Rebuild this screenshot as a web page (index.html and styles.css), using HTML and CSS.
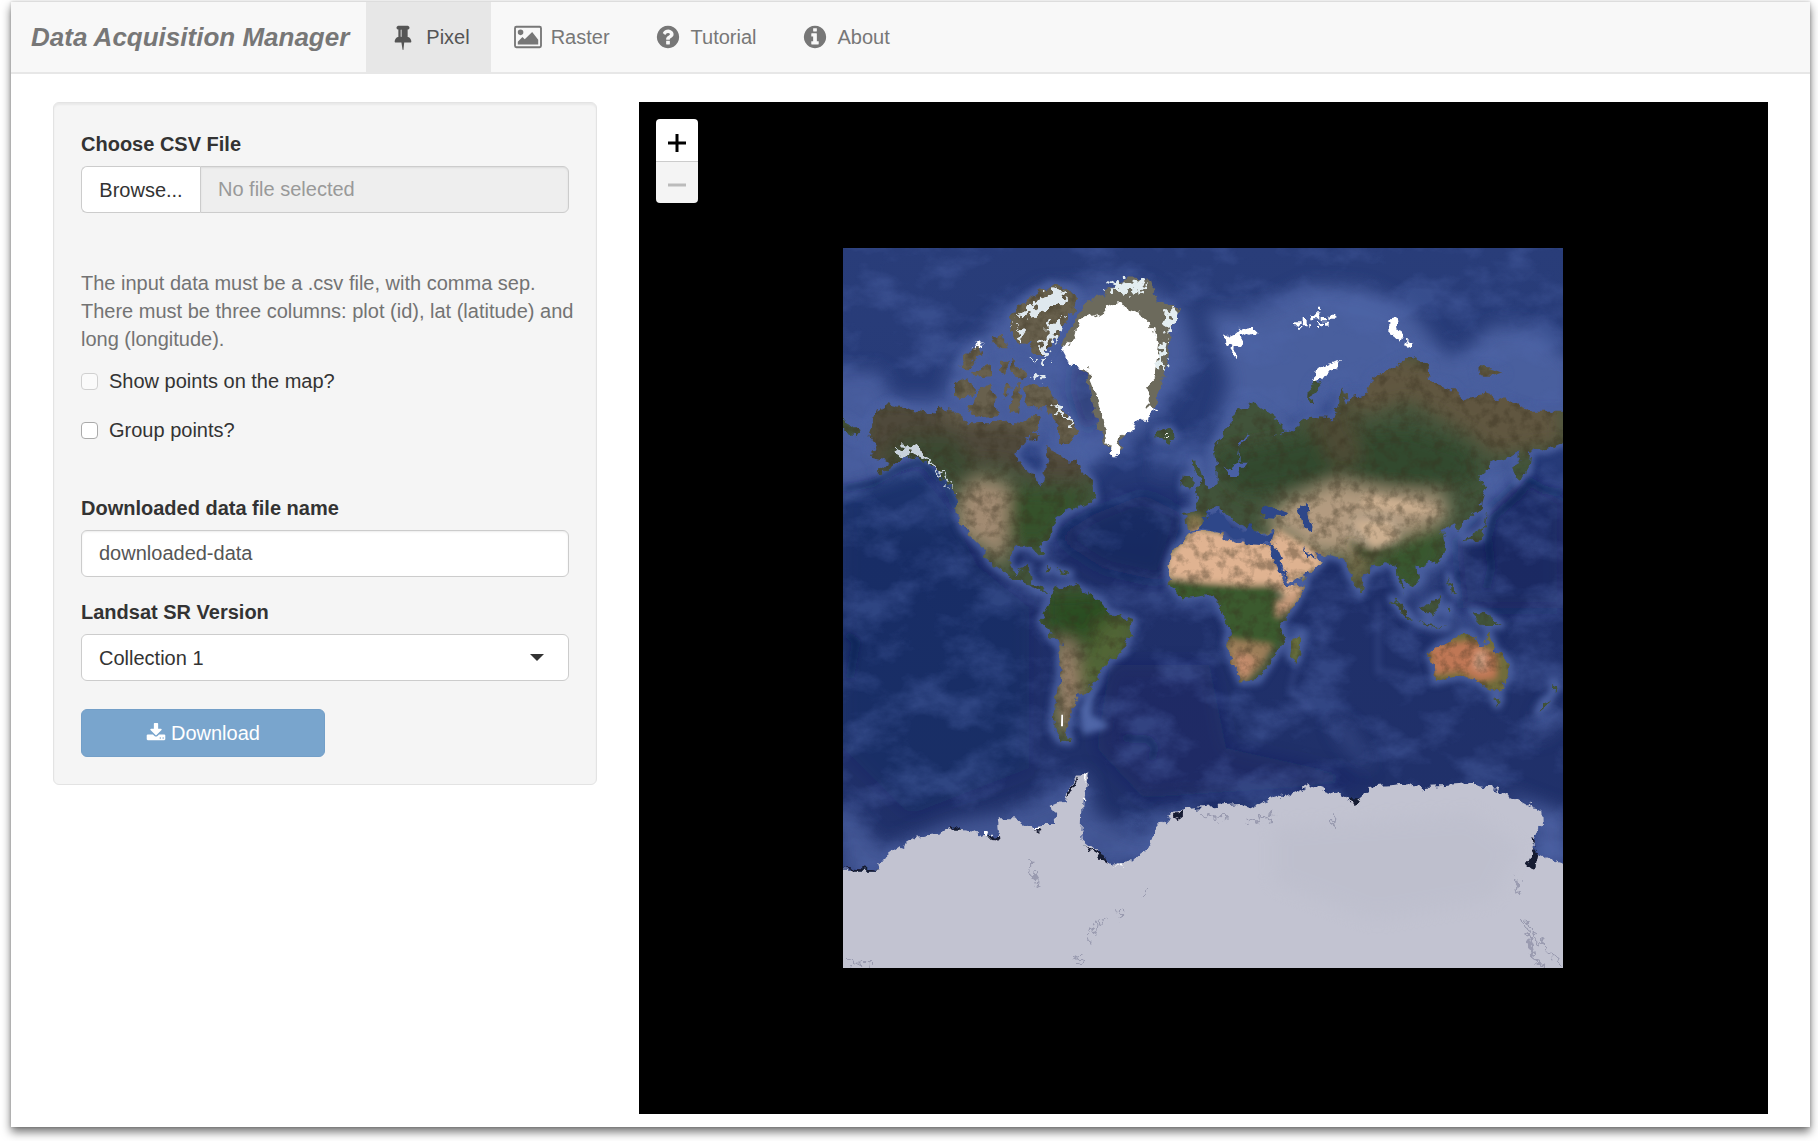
FILE: index.html
```html
<!DOCTYPE html>
<html lang="en">
<head>
<meta charset="utf-8">
<title>Data Acquisition Manager</title>
<link rel="stylesheet" href="styles.css">
</head>
<body>
<div class="window">
  <nav class="navbar">
    <a class="brand" href="#">Data Acquisition Manager</a>
    <a class="tab tab-active" href="#pixel">
      <svg class="icon icon-nav" viewBox="0 0 1792 1792" aria-hidden="true"><path d="M800 864v-448q0-14-9-23t-23-9-23 9-9 23v448q0 14 9 23t23 9 23-9 9-23zm672 352q0 26-19 45t-45 19h-429l-51 483q-2 12-10.500 20.500t-20.500 8.500h-1q-27 0-32-27l-76-485h-404q-26 0-45-19t-19-45q0-123 78.500-221.500t177.500-98.500v-512q-52 0-90-38t-38-90 38-90 90-38h640q52 0 90 38t38 90-38 90-90 38v512q99 0 177.500 98.500t78.500 221.500z"/></svg>
      <span>Pixel</span>
    </a>
    <a class="tab" href="#raster">
      <svg class="icon icon-nav" viewBox="0 -128 1920 1792" aria-hidden="true"><path fill-rule="evenodd" d="M640 448a192 192 0 1 1-384 0 192 192 0 1 1 384 0zM1664 960v320H256v-192l320-320 160 160 512-512zM1760 128H160q-32 0-32 32v1216q0 32 32 32h1600q32 0 32-32V160q0-32-32-32zM1920 160v1216q0 160-160 160H160Q0 1536 0 1376V160Q0 0 160 0h1600q160 0 160 160z"/></svg>
      <span>Raster</span>
    </a>
    <a class="tab" href="#tutorial">
      <svg class="icon icon-nav" viewBox="0 0 1792 1792" aria-hidden="true"><path d="M1024 1376v-192q0-14-9-23t-23-9h-192q-14 0-23 9t-9 23v192q0 14 9 23t23 9h192q14 0 23-9t9-23zm256-672q0-88-55.500-163t-138.500-116-170-41q-243 0-371 213-15 24 8 42l132 100q7 6 19 6 16 0 25-12 53-68 86-92 34-24 86-24 48 0 85.500 26t37.500 59q0 38-20 61t-68 45q-63 28-115.500 86.500t-52.500 125.500v36q0 14 9 23t23 9h192q14 0 23-9t9-23q0-19 21.500-49.500t54.500-49.500q32-18 49-28.500t46-35 44.500-48 28-60.500 12.500-81zm384 192q0 209-103 385.500t-279.500 279.500-385.500 103-385.500-103-279.500-279.500-103-385.500 103-385.500 279.500-279.500 385.500-103 385.500 103 279.500 279.500 103 385.500z"/></svg>
      <span>Tutorial</span>
    </a>
    <a class="tab" href="#about">
      <svg class="icon icon-nav" viewBox="0 0 1792 1792" aria-hidden="true"><path d="M1152 1376v-160q0-14-9-23t-23-9h-96v-512q0-14-9-23t-23-9h-320q-14 0-23 9t-9 23v160q0 14 9 23t23 9h96v320h-96q-14 0-23 9t-9 23v160q0 14 9 23t23 9h448q14 0 23-9t9-23zm-128-896v-160q0-14-9-23t-23-9h-192q-14 0-23 9t-9 23v160q0 14 9 23t23 9h192q14 0 23-9t9-23zm640 416q0 209-103 385.500t-279.500 279.500-385.500 103-385.500-103-279.500-279.500-103-385.500 103-385.500 279.500-279.500 385.500-103 385.500 103 279.500 279.500 103 385.500z"/></svg>
      <span>About</span>
    </a>
  </nav>

  <main class="content">
    <form class="panel">
      <label class="field-label" for="csv-name">Choose CSV File</label>
      <div class="file-group">
        <button class="browse" type="button">Browse...</button>
        <input class="control file-name" id="csv-name" type="text" placeholder="No file selected" readonly>
      </div>
      <p class="help">The input data must be a .csv file, with comma sep. There must be three columns: plot (id), lat (latitude) and long (longitude).</p>
      <label class="check"><input type="checkbox" disabled><span>Show points on the map?</span></label>
      <label class="check"><input type="checkbox"><span>Group points?</span></label>
      <label class="field-label spaced" for="file-name">Downloaded data file name</label>
      <input class="control" id="file-name" type="text" value="downloaded-data">
      <label class="field-label" for="version">Landsat SR Version</label>
      <div class="select-wrap">
        <select class="control" id="version"><option>Collection 1</option></select>
      </div>
      <button class="download" type="button" disabled>
        <svg class="icon icon-small" viewBox="0 0 1792 1792" aria-hidden="true"><path d="M1344 1344q0-26-19-45t-45-19-45 19-19 45 19 45 45 19 45-19 19-45zm256 0q0-26-19-45t-45-19-45 19-19 45 19 45 45 19 45-19 19-45zm128-224v320q0 40-28 68t-68 28h-1472q-40 0-68-28t-28-68v-320q0-40 28-68t68-28h465l135 136q58 56 136 56t136-56l136-136h464q40 0 68 28t28 68zm-325-569q17 41-14 70l-448 448q-18 19-45 19t-45-19l-448-448q-31-29-14-70 17-39 59-39h256v-448q0-26 19-45t45-19h256q26 0 45 19t19 45v448h256q42 0 59 39z"/></svg>
        <span>Download</span>
      </button>
    </form>

    <section class="map" aria-label="World map">
      <svg class="world" viewBox="0 0 2160 2160" aria-hidden="true">
        <defs>
          <linearGradient id="sea" x1="0" y1="0" x2="0" y2="1">
            <stop offset="0" stop-color="#293d79"/><stop offset=".3" stop-color="#263a78"/>
            <stop offset=".42" stop-color="#1f2f69"/><stop offset="1" stop-color="#21326b"/>
          </linearGradient>
          <filter id="rough" x="-5%" y="-5%" width="110%" height="110%">
            <feTurbulence type="fractalNoise" baseFrequency=".035" numOctaves="3" seed="4" result="n"/>
            <feDisplacementMap in="SourceGraphic" in2="n" scale="34" xChannelSelector="R" yChannelSelector="G"/>
          </filter>
          <filter id="shred" x="-10%" y="-10%" width="120%" height="120%">
            <feTurbulence type="fractalNoise" baseFrequency=".05" numOctaves="2" seed="9" result="n"/>
            <feDisplacementMap in="SourceGraphic" in2="n" scale="60" xChannelSelector="R" yChannelSelector="G"/>
          </filter>
          <filter id="soft" x="-20%" y="-20%" width="140%" height="140%"><feGaussianBlur stdDeviation="9"/></filter>
          <filter id="haze" x="-30%" y="-30%" width="160%" height="160%"><feGaussianBlur stdDeviation="26"/></filter>
          <filter id="relief" x="0" y="0" width="100%" height="100%" color-interpolation-filters="sRGB">
            <feTurbulence type="fractalNoise" baseFrequency=".03" numOctaves="5" seed="12"/>
            <feColorMatrix values="0 0 0 0 .22  0 0 0 0 .19  0 0 0 0 .12  3 0 0 0 -1.300"/>
          </filter>
          <filter id="glow" x="0" y="0" width="100%" height="100%" color-interpolation-filters="sRGB">
            <feTurbulence type="fractalNoise" baseFrequency=".006 .009" numOctaves="6" seed="31"/>
            <feColorMatrix values="0 0 0 0 .32  0 0 0 0 .41  0 0 0 0 .68  0 3 0 0 -1.300"/>
          </filter>
          <g id="lands">
            <g transform="translate(-9 -9)">
              <path d="M85 570 110 500 150 478 220 495 270 505 300 488 340 500 380 530 440 535 500 530 555 535 580 500 600 510 590 560 550 590 525 625 540 660 580 685 605 725 615 690 625 650 615 610 650 620 670 640 690 650 715 640 725 680 755 710 765 765 735 775 700 790 650 820 630 870 605 890 610 930 598 930 575 905 530 905 508 925 505 965 530 985 560 965 570 1010 600 1030 630 1040 600 1040 560 1015 520 1000 480 975 450 950 430 910 400 880 370 850 350 800 345 750 310 700 270 650 220 635 180 645 130 690 110 680 150 650 95 635 110 600Z"/>
              <path d="M9 520 60 555 50 580 9 550ZM345 415 380 400 410 440 370 465 345 450ZM385 490 410 450 445 420 465 450 470 510 400 520ZM355 365 380 325 420 290 430 330 380 370ZM390 385 450 360 450 390 400 400ZM480 350 500 350 500 390 480 385ZM510 340 560 380 550 400 520 390ZM455 280 490 270 500 310 470 310ZM490 420 505 420 505 460 490 460ZM520 415 540 415 535 500 515 500ZM550 430 590 420 620 430 650 480 700 530 715 560 690 600 660 590 660 540 620 490 560 490ZM570 570 590 570 585 590Z"/>
              <path d="M505 250 520 200 570 160 630 120 690 130 715 160 690 210 660 260 630 300 610 330 580 330 565 290 540 300Z"/>
              <path d="M950 555 990 550 1005 575 985 590 955 585ZM620 980 640 965 625 960ZM650 975 690 985 690 990 655 985Z"/>
              <path d="M625 1070 650 1030 700 1020 745 1045 790 1075 800 1100 880 1125 865 1175 850 1220 810 1245 780 1285 740 1340 710 1355 690 1405 680 1455 690 1490 660 1485 640 1455 645 1365 660 1305 662 1205 630 1170 605 1125Z"/>
              <path d="M1030 730 1035 690 1055 690 1055 720ZM1055 650 1075 650 1085 690 1110 740 1085 760 1070 745 1080 715Z"/>
            </g>
            <g transform="translate(1071 -9)">
              <path d="M-30 860 10 855 70 862 75 885 120 895 140 885 205 895 240 980 265 1022 318 1018 280 1085 240 1130 250 1185 215 1245 175 1305 125 1310 105 1265 80 1195 90 1155 62 1085 40 1048-10 1055-50 1060-90 1020-95 960-80 920Z"/>
              <path d="M270 1235 275 1190 305 1165 300 1205 290 1250Z"/>
              <path d="M40 610 70 570 110 500 160 475 200 500 250 540 250 560 220 575 270 555 330 515 400 520 415 480 430 430 445 480 455 450 500 440 520 400 580 360 630 335 685 360 690 410 750 425 790 465 860 445 920 470 1000 500 1095 500 1095 590 1050 610 990 620 985 680 950 715 940 670 960 625 880 650 835 690 855 740 840 790 790 830 780 865 765 835 725 855 740 910 720 945 655 965 660 1005 640 1025 600 1000 615 1050 590 990 585 960 560 950 520 970 490 1000 482 1045 455 1000 430 940 350 925 365 950 320 995 270 1012 240 950 210 900 225 860 180 868 130 850 60 790 20 800 10 845-40 855-45 800-5 795-15 755 50 720 50 670Z"/>
              <path d="M325 480 330 430 350 400 360 420 335 455 345 480ZM835 370 870 370 910 385 880 395 840 395ZM790 885 850 850 865 795 850 880Z"/>
              <path d="M575 1060 600 1075 640 1125 610 1105ZM665 1095 715 1055 715 1095 690 1115ZM650 1132 740 1145 700 1145ZM735 1090 750 1085 745 1110ZM815 1100 860 1110 905 1140 850 1140ZM745 990 770 1050 755 1040Z"/>
              <path d="M688 1230 720 1200 760 1185 790 1160 820 1170 835 1205 855 1205 865 1165 885 1215 925 1250 928 1285 895 1340 860 1330 830 1305 790 1290 750 1298 705 1308 702 1265ZM880 1360 902 1358 892 1380ZM1060 1310 1072 1325 1058 1345ZM1050 1355 1040 1380 1015 1400 1030 1370Z"/>
            </g>
          </g>
          <clipPath id="frame"><path d="M0 0H2160V2160H0Z"/></clipPath>
          <mask id="landmask"><use href="#lands" fill="#fff" filter="url(#rough)"/></mask>
        </defs>

        <g clip-path="url(#frame)">
          <rect width="2160" height="2160" fill="url(#sea)"/>
          <!-- continental shelves and ridges -->
          <g filter="url(#haze)" fill="#4a5e9e">
            <path d="M-50 370 110 370 150 450 300 450 330 340 480 200 600 120 900 110 1020 180 1060 330 990 440 900 560 760 640 700 740 560 540 50 720-50 720Z" opacity=".95"/>
            <path d="M1090 190 1230 190 1400 110 1560 120 1700 180 1800 310 1850 320 1950 230 2080 240 2200 350V520L1900 480 1500 450 1300 560 1130 780 1040 760 1110 560 1160 400Z"/>
            <path d="M1900 640 2040 620 2010 730 1920 800 1850 900 1790 940 1740 1030 1680 980 1800 830Z"/>
            <path d="M-30 1670 10 1680 120 1800 320 1720 500 1690 640 1630 730 1570 760 1700 900 1760 1000 1660 1000 1850 0 1900Z" opacity=".8"/>
            <path d="M1960 1620 2180 1700V1900L2080 1850 2060 1700Z" opacity=".9"/>
            <path d="M2090 1390 2160 1380 2140 1430 2080 1480Z" opacity=".7"/>
            <path d="M1460 1400 1520 1430 1590 1550 1560 1560 1480 1460Z" opacity=".45"/>
            <path d="M1660 1000 1760 1130 1890 1170 1950 1150 1800 1060Z" opacity=".6"/>
            <path d="M940 600 1080 560 1060 660 930 690Z" opacity=".4"/>
          </g>
          <g filter="url(#haze)" fill="#16235a">
            <path d="M690 340 760 380 770 520 720 560 680 420Z" opacity=".5"/>
            <path d="M640 870 750 800 900 740 1020 800 960 1000 780 960Z" opacity=".6"/>
            <path d="M0 740 220 660 330 800 400 950 560 1080 560 1560 200 1700 0 1500Z" opacity=".2"/>
            <path d="M1840 880 2040 690 2160 760 2160 1080 1860 1080Z" opacity=".45"/>
            <path d="M800 1250 1100 1250 1150 1500 1600 1600 900 1650 760 1500Z" opacity=".3"/>
          </g>
          <rect width="2160" height="2160" filter="url(#glow)" opacity=".4"/>
          <g filter="url(#soft)" fill="none" stroke="#485e9f" stroke-width="26" stroke-linejoin="round"><use href="#lands"/></g>
          <path d="M0 722 90 705 160 665 230 640 310 710 340 780M2160 735 2100 725 2060 700 2020 750 1950 810 1935 870 1945 960 1930 1020M1740 730M840 1470 920 1475 935 1500 925 1535M20 1290 40 1180 10 1160" fill="none" stroke="#101b4c" stroke-width="9" filter="url(#soft)"/>
          <path d="M710 1385 730 1340 790 1280 750 1350 745 1400 800 1430 780 1445 720 1460Z" fill="#4f66a7" filter="url(#soft)"/>
          <path d="M1605 1060 1605 1280M1610 1270 1680 1280M1410 1110 1450 1150 1430 1200M1310 1390 1400 1380 1340 1330 1360 1250" fill="none" stroke="#5268aa" stroke-width="9" opacity=".5" filter="url(#soft)"/>

          <!-- land cover -->
          <g mask="url(#landmask)">
            <rect width="2160" height="2160" fill="#41533a"/>
            <g filter="url(#haze)">
              <path d="M60 450 600 470 760 620 740 700 600 700 480 650 200 640 60 700Z" fill="#50493a"/>
              <path d="M180 560 330 560 420 680 330 700 250 640 100 640Z" fill="#3a4a30"/>
              <path d="M400 690 490 700 510 800 480 960 430 900 350 860 340 750Z" fill="#a28b72"/>
              <path d="M500 720 740 730 600 900 490 880Z" fill="#34512c"/>
              <path d="M310 240 480 200 500 80 740 80 730 340 780 560 660 620 540 530 310 520Z" fill="#67614d"/>
              <path d="M600 1040 800 1030 870 1130 800 1240 680 1180 600 1120Z" fill="#2b4d24"/>
              <path d="M780 1110 890 1110 850 1230 730 1350 700 1260Z" fill="#516536"/>
              <path d="M640 1180 690 1180 710 1340 690 1450 650 1450Z" fill="#a68670"/>
              <path d="M1490 430 1600 300 1760 340 1900 340 2000 340 2160 480 2160 590 1950 620 1880 560 1700 460 1560 500Z" fill="#60563f"/>
              <path d="M1100 620 1400 560 1700 540 1880 600 1900 700 1700 730 1500 690 1200 740Z" fill="#304a2d"/>
              <path d="M1380 500 1520 450 1560 640 1480 670Z" fill="#4e4b35"/>
              <path d="M1330 760 1480 700 1640 730 1800 740 1820 800 1700 860 1640 900 1540 890 1480 920 1400 910 1340 860 1260 830Z" fill="#b39b80"/>
              <path d="M1540 810 1650 810 1680 880 1600 900 1520 860Z" fill="#b9a690"/>
              <path d="M1700 850 1810 830 1800 940 1700 1040 1620 960 1540 920Z" fill="#38562d"/>
              <path d="M1520 890 1580 920 1560 1040 1500 960Z" fill="#786e4c"/>
            </g>
            <g filter="url(#soft)">
              <path d="M1560 740 1700 760 1800 800 1660 790 1560 780ZM1530 820 1640 820 1670 870 1590 900Z" fill="#cdb091"/>
              <path d="M1510 870 1570 910 1660 900 1650 920 1560 930Z" fill="#3c4a2c"/>
              <path d="M970 930 1050 840 1290 870 1340 1000 1390 1010 1340 1060 1290 1010 1180 1015 970 990Z" fill="#e0b391"/>
              <path d="M1270 880 1300 840 1440 920 1440 960 1330 1010Z" fill="#deb290"/>
              <path d="M970 1000 1290 1015 1310 1090 1330 1160 1290 1210 1160 1190 1120 1050 980 1070Z" fill="#3a5a2f"/>
              <path d="M1300 1060 1400 1010 1350 1080 1300 1110Z" fill="#c69a7a"/>
              <path d="M1150 1170 1290 1190 1260 1250 1200 1310 1150 1250Z" fill="#9b7d58"/>
              <path d="M1180 1210 1240 1230 1210 1290 1180 1270Z" fill="#c58d6d"/>
              <path d="M1740 1150 2010 1150 2010 1350 1740 1330Z" fill="#6f6c3b"/>
              <path d="M1760 1190 1890 1180 1960 1220 1960 1290 1910 1300 1850 1270 1770 1280Z" fill="#bf7755"/>
              <path d="M1900 1210 1930 1210 1930 1270 1890 1260Z" fill="#d4a083"/>
              <path d="M1345 1160 1375 1160 1360 1250 1345 1240Z" fill="#75773e"/>
              <path d="M1030 800 1080 800 1080 845 1030 845Z" fill="#83754d"/>
            </g>
            <rect width="2160" height="2160" filter="url(#relief)" opacity=".38"/>
          </g>
          <!-- inland seas -->
          <g transform="translate(1071 -9)" fill="#2e4789" filter="url(#rough)">
            <path d="M0 850 20 805 55 795 80 830 130 860 155 835 175 870 225 862 218 895 130 892 75 862ZM180 815 195 788 225 785 262 805 255 820ZM295 790 320 775 322 805 335 850 310 850ZM210 900 225 905 262 995 268 1015 235 970ZM305 905 330 930 350 935 325 942Z"/>
            <path d="M65 665 85 690 110 695 145 650 120 650 115 610 150 575 145 565 115 600 115 650 95 670Z" fill="#4a61a5"/>
          </g>

          <!-- northern ice -->
          <g fill="#fff">
            <path filter="url(#rough)" transform="translate(-9 -9)" fill="#6c6a5c" d="M720 200 740 170 800 140 860 100 930 105 950 170 1020 190 990 240 975 380 945 490 860 560 830 630 795 600 770 540 740 380 660 300Z"/>
            <path filter="url(#rough)" transform="translate(-9 -9)" d="M715 225 770 210 830 175 900 205 940 245 960 300 945 400 920 430 920 490 950 495 880 545 840 580 830 635 795 590 785 490 760 420 740 370 690 365 660 310 700 280Z"/>
            <g transform="translate(-9 -9)" filter="url(#shred)">
              <path d="M975 190 1015 190 985 260 970 250ZM805 130 860 105 930 115 900 140 850 150ZM960 280 980 290 970 380 955 360Z" fill="#e3edf0"/>
              <path d="M590 170 650 125 690 150 640 190 580 210 530 220ZM620 240 670 215 650 270 620 310ZM525 240 550 260 545 300 530 280ZM600 290 630 300 605 335ZM580 385 610 380 605 400 580 400ZM570 345 620 345 610 355ZM640 480 665 490 705 555 690 545Z" fill="#dfe8ee"/>
              <path d="M170 610 215 600 260 630 310 690 350 740 300 690 255 640 210 625 180 635Z" fill="#c9d3dc"/>
              <path d="M400 310 425 295 420 310ZM975 575 990 570 990 580Z"/>
            </g>
            <g transform="translate(1071 -9)" filter="url(#rough)">
              <path d="M75 265 95 280 120 260 110 245 135 250 165 245 170 265 145 275 125 265 130 295 110 310 108 345 95 335 100 305 80 300ZM565 225 590 220 595 250 608 270 600 290 580 270 565 260ZM615 285 640 290 630 305 612 300Z"/>
              <path d="M285 232h14v9h-14zM305 225h15v10h-15zM298 243h12v8h-12zM348 188h12v12h-12zM340 208h18v12h-18zM362 216h16v10h-16zM385 212h18v12h-18zM350 228h16v10h-16zM372 230h14v9h-14zM345 244h12v8h-12zM325 238h10v7h-10z"/>
              <path d="M338 415 348 378 378 352 420 342 412 368 380 385 360 412Z"/>
            </g>
            <path d="M655 1400 660 1400 660 1435 654 1435Z"/>
          </g>

          <!-- Antarctica -->
          <g transform="translate(-9 1056)">
            <path filter="url(#rough)" fill="#c2c3d1" d="M-30 808 110 812 140 770 180 740 230 710 310 700 340 685 400 695 435 715 475 715 470 655 520 655 580 680 610 675 650 675 635 620 670 605 685 570 710 530 745 515 738 560 728 600 724 715 790 770 830 795 870 790 930 740 940 700 985 650 1020 630 1100 620 1200 612 1235 625 1280 600 1360 580 1410 557 1460 575 1520 595 1545 608 1575 580 1585 560 1660 555 1700 550 1745 565 1820 560 1900 555 1970 570 2040 600 2110 640 2112 680 2080 710 2082 760 2130 780 2200 800V1160H-30Z"/>
            <path d="M1300 680 1900 640 2040 740 1960 900 1600 960 1300 850Z" fill="#babcca" opacity=".45" filter="url(#haze)"/>
            <path filter="url(#rough)" fill="#161b33" d="M9 800 100 808 120 812 40 812ZM335 685 360 680 370 692 340 692ZM450 712 480 705 482 722 455 720ZM585 685 602 682 600 695ZM680 600 690 565 715 530 700 570ZM735 735 800 775 800 785 760 760ZM1000 655 1025 630 1028 645 1010 660ZM1525 598 1560 598 1545 612ZM2070 715 2082 718 2080 730ZM2060 790 2080 740 2095 765 2085 810 2060 800Z"/>
            <path filter="url(#rough)" fill="#fff" d="M432 690 442 690 455 710 438 715ZM580 678 602 678 595 688ZM725 590 737 590 735 605ZM725 530 740 520 735 550ZM820 795 845 792 845 800Z"/>
            <path filter="url(#shred)" fill="none" stroke="#85879f" stroke-width="6" d="M2025 830 2040 880M2040 950 2060 1000 2080 1060 2110 1100M2060 960 2100 1030 2160 1090M2070 1010 2090 1090M745 1030 770 970 800 950M830 960 845 930M905 885 925 870M700 1085 730 1070M570 780 575 820 600 860M20 1070 50 1090 90 1095M1480 640 1495 690M1080 650 1160 655M1220 660 1300 650" opacity=".65"/>
          </g>
        </g>
      </svg>
      <div class="zoom">
        <button type="button" aria-label="Zoom in"><svg viewBox="0 0 18 18" aria-hidden="true"><path d="M9 0v18M0 9h18"/></svg></button>
        <button type="button" aria-label="Zoom out" disabled><svg viewBox="0 0 18 18" aria-hidden="true"><path d="M0 9h18"/></svg></button>
      </div>
    </section>
  </main>
</div>
</body>
</html>
```
FILE: styles.css
```css
* {
  box-sizing: border-box;
}

body {
  margin: 0;
  padding: 2px 8px 14px 11px;
  background: #fff;
  color: #333;
  font: 20px/28px "Liberation Sans", Arial, sans-serif;
}

button,
input,
select {
  font: inherit;
  color: inherit;
}

.window {
  background: #fff;
  box-shadow: 0 5px 9px rgba(0, 0, 0, .55), 0 0 3px rgba(0, 0, 0, .2);
}

.navbar {
  display: flex;
  height: 72px;
  background: #f8f8f8;
  border-bottom: 2px solid #e7e7e7;
}

.brand,
.tab {
  display: flex;
  align-items: center;
  color: #777;
  text-decoration: none;
}

.brand {
  padding: 0 17px 0 20px;
  font-size: 26px;
  font-weight: bold;
  font-style: italic;
}

.tab {
  gap: 7px;
  padding: 0 21px;
}

.tab-active {
  background: #e7e7e7;
  color: #555;
}

.icon {
  flex: none;
  fill: currentColor;
}

.icon-nav {
  width: 32px;
  height: 26px;
}

.icon-small {
  width: 20px;
  height: 20px;
}

.content {
  display: grid;
  grid-template-columns: repeat(12, minmax(0, 1fr));
  column-gap: 42px;
  align-items: start;
  padding: 28px 42px 13px;
}

.panel {
  grid-column: span 4;
  display: flex;
  flex-direction: column;
  padding: 27px;
  background: #f5f5f5;
  border: 1px solid #e3e3e3;
  border-radius: 6px;
  box-shadow: inset 0 2px 2px rgba(0, 0, 0, .05);
}

.field-label {
  margin-bottom: 8px;
  font-weight: bold;
}

.control {
  width: 100%;
  height: 47px;
  margin: 0 0 21px;
  padding: 0 17px;
  background: #fff;
  border: 1px solid #ccc;
  border-radius: 6px;
  box-shadow: inset 0 1px 2px rgba(0, 0, 0, .08);
  color: #555;
}

.file-group {
  display: flex;
  margin-bottom: 56px;
}

.browse {
  flex: none;
  width: 119px;
  padding: 0;
  background: #fff;
  border: 1px solid #ccc;
  border-right: 0;
  border-radius: 6px 0 0 6px;
}

.file-name {
  flex: 1;
  min-width: 0;
  margin: 0;
  background: #eee;
  border-radius: 0 6px 6px 0;
}

.file-name::placeholder {
  color: #999;
  opacity: 1;
}

.help {
  margin: 0 -14px 14px 0;
  color: #737373;
}

.check {
  display: flex;
  align-items: center;
  gap: 11px;
  margin-bottom: 21px;
}

.check input {
  appearance: none;
  width: 17px;
  height: 17px;
  margin: 0;
  background: #fff;
  border: 1px solid #aaa;
  border-radius: 4px;
}

.check input:disabled {
  background: #fafafa;
  border-color: #d0d0d0;
}

.spaced {
  margin-top: 29px;
}

.select-wrap {
  position: relative;
}

.select-wrap .control {
  display: block;
  appearance: none;
  margin-bottom: 28px;
  box-shadow: none;
  color: #333;
}

.select-wrap::after {
  content: "";
  position: absolute;
  top: 20px;
  right: 25px;
  border: 7px solid transparent;
  border-top-color: #333;
  border-bottom: 0;
  pointer-events: none;
}

.download {
  display: flex;
  align-items: center;
  justify-content: center;
  gap: 5px;
  width: 50%;
  height: 48px;
  padding: 0;
  background: #79a5cd;
  border: 1px solid #739fc8;
  border-radius: 6px;
  color: #fff;
}

.map {
  grid-column: span 8;
  position: relative;
  display: flex;
  align-items: center;
  justify-content: center;
  height: calc(100vh - 129px);
  min-height: 760px;
  background: #000;
  overflow: hidden;
}

.world {
  flex: none;
  width: 720px;
  height: 720px;
}

.zoom {
  position: absolute;
  top: 17px;
  left: 17px;
  width: 42px;
  border-radius: 4px;
  overflow: hidden;
}

.zoom button {
  display: flex;
  align-items: center;
  justify-content: center;
  width: 100%;
  height: 42px;
  padding: 5px 0 0;
  background: #fff;
  border: 0;
  color: #000;
}

.zoom button + button {
  border-top: 1px solid #ccc;
}

.zoom button:disabled {
  background: #f4f4f4;
  color: #bbb;
}

.zoom svg {
  width: 18px;
  height: 18px;
  fill: none;
  stroke: currentColor;
  stroke-width: 3;
}
```
